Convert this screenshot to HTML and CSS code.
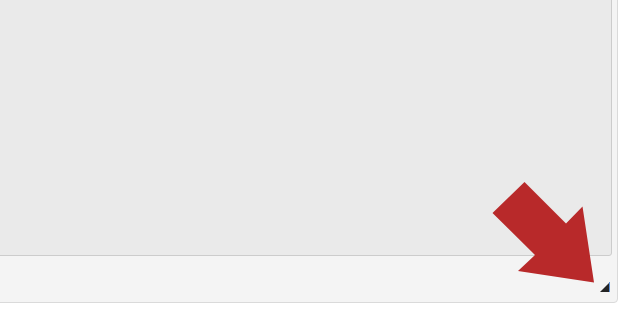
FILE: index.html
```html
<!DOCTYPE html>
<html>
<head>
<meta charset="utf-8">
<link rel="stylesheet" href="styles.css">
</head>
<body>
<div class="panel">
  <div class="field"></div>
  <div class="grip"></div>
</div>
<svg class="arrow" width="626" height="315" viewBox="0 0 626 315">
  <polygon points="524.5,182 492.5,213 535,255 518,271 594,282.5 582.5,206.5 566,223.5" fill="#b8292a"/>
</svg>
</body>
</html>
```
FILE: styles.css
```css
html, body {
  margin: 0;
  padding: 0;
  background: #ffffff;
  overflow: hidden;
  width: 626px;
  height: 315px;
}
body {
  position: relative;
}
.panel {
  position: relative;
  box-sizing: border-box;
  margin: -10px 0 0 -10px;
  width: 628px;
  height: 313px;
  background: #f4f4f4;
  border: 1px solid #dadada;
  border-radius: 0 0 4px 0;
  padding: 0 5px 46px 0;
}
.field {
  box-sizing: border-box;
  height: 265px;
  background: #eaeaea;
  border: 1px solid #cccccc;
  border-radius: 0 0 3px 0;
}
.grip {
  position: absolute;
  left: 609px;
  top: 291px;
  width: 0;
  height: 0;
  border-style: solid;
  border-width: 0 0 10px 10px;
  border-color: transparent transparent #232323 transparent;
  box-shadow: 1px 0 0 -0px transparent;
}
.grip::after {
  content: "";
  position: absolute;
  left: -1px;
  top: 0;
  width: 1px;
  height: 10px;
  background: #5b8fd6;
}
.arrow {
  position: absolute;
  left: 0;
  top: 0;
}
```
